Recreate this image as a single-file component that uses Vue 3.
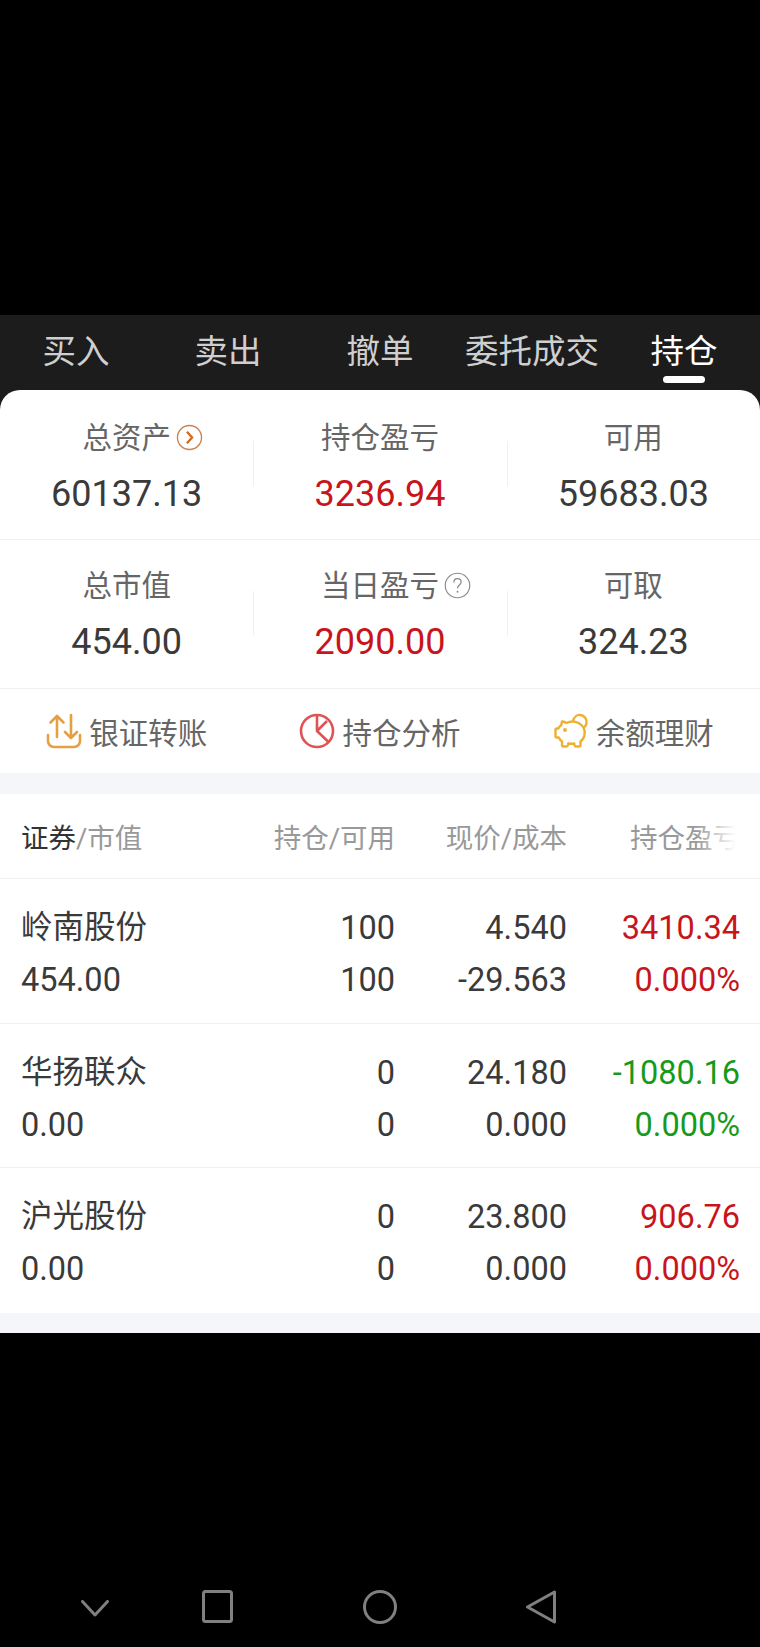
<template>
  <div class="page">
    <div class="top-space"></div>

    <div class="tabs">
      <div v-for="tab in tabs" :key="tab" class="tab" :class="{ active: tab === '持仓' }">{{ tab }}</div>
    </div>

    <div class="sheet">
      <div v-for="(row, r) in stats" :key="r" class="stat-row">
        <div v-for="item in row" :key="item.label" class="stat">
          <div class="stat-label">
            <span class="label-text">{{ item.label }}
              <svg v-if="item.icon === 'go'" class="label-icon" viewBox="0 0 26 26" fill="none">
                <circle cx="13" cy="13" r="11.6" stroke="#c9814f" stroke-width="1.3" />
                <path d="M10.5 7.5L15.5 13L10.5 18.5" stroke="#d2691e" stroke-width="2.2" />
              </svg>
              <svg v-if="item.icon === 'help'" class="label-icon" viewBox="0 0 26 26" fill="none">
                <circle cx="13" cy="13" r="11.8" stroke="#8a8a8a" stroke-width="1.1" />
                <path d="M9.5 10c0-2.3 1.500-3.700 3.500-3.700s3.500 1.300 3.500 3.300c0 2.800-3.500 3-3.500 6" stroke="#8a8a8a" stroke-width="1.200" />
                <circle cx="13" cy="19" r="0.9" fill="#8a8a8a" />
              </svg>
            </span>
          </div>
          <div class="stat-value" :class="{ red: item.red }">{{ item.value }}</div>
        </div>
      </div>

      <div class="actions">
        <div class="action">
          <svg class="action-icon" viewBox="0 0 36 36" fill="none" stroke="#e5a043" stroke-width="2.600" stroke-linecap="round" stroke-linejoin="round">
            <path d="M2 22v6a6 6 0 0 0 6 6h20a6 6 0 0 0 6-6v-6" />
            <path d="M11 24V3M4.500 9.500L11 3l6.500 6.500" />
            <path d="M25 2v23M19 19l6 6 6-6" />
          </svg>
          <span>银证转账</span>
        </div>
        <div class="action">
          <svg class="action-icon" viewBox="0 0 36 36" fill="none" stroke="#df5355" stroke-width="2.600" stroke-linejoin="round">
            <circle cx="18" cy="18" r="16" />
            <path d="M18 2v16l11.500 11M18 18l10-10" />
          </svg>
          <span>持仓分析</span>
        </div>
        <div class="action">
          <svg class="action-icon" viewBox="0 0 36 36" fill="none" stroke="#eeb02f" stroke-width="2.400" stroke-linejoin="round" stroke-linecap="round">
            <path d="M20 8c1-4 4-6.500 7.500-6 4 .5 6.500 4 6 8-.2 1.500-.7 2.500-1.500 3.500" />
            <path d="M9 8.500c2.500 0 3.500 1 4.500 1.500 3-1.500 8-2 12 0 5 2.500 7 7 6 12-.5 3-2 5-4 6.500v3.500c0 1-.7 1.500-1.500 1.500h-3c-.8 0-1.300-.5-1.500-1.500l-.3-1.500c-2 .4-4 .4-6 0l-.2 1.500c-.2 1-.7 1.500-1.500 1.500h-3c-.8 0-1.500-.5-1.500-1.500v-3.500c-1.500-1-2.500-2.500-3.200-4H4c-1 0-1.500-.7-1.500-1.500v-6c0-.8.500-1.500 1.500-1.500h1.300c.7-1.500 1.700-2.500 3-3.500z" />
            <circle cx="12" cy="17" r="0.8" fill="#eeb02f" />
          </svg>
          <span>余额理财</span>
        </div>
      </div>

      <div class="band"></div>

      <div class="table">
        <div class="table-head">
          <div class="cell-name"><b>证券</b>/市值</div>
          <div class="cell">持仓/可用</div>
          <div class="cell">现价/成本</div>
          <div class="cell fade">持仓盈亏</div>
        </div>
        <div v-for="s in stocks" :key="s.name" class="table-row">
          <div class="cell-name">
            <div class="stock-name">{{ s.name }}</div>
            <div>{{ s.cap }}</div>
          </div>
          <div class="cell">
            <div>{{ s.hold }}</div>
            <div>{{ s.free }}</div>
          </div>
          <div class="cell">
            <div>{{ s.price }}</div>
            <div>{{ s.cost }}</div>
          </div>
          <div class="cell" :class="s.gain">
            <div>{{ s.profit }}</div>
            <div>{{ s.rate }}</div>
          </div>
        </div>
      </div>

      <div class="band bottom"></div>
    </div>

    <div class="nav">
      <svg class="nav-chevron" viewBox="0 0 28 17" fill="none">
        <path d="M1.500 1.500L14 15L26.500 1.500" />
      </svg>
      <svg class="nav-square" viewBox="0 0 31 33" fill="none">
        <rect x="1.500" y="1.500" width="28" height="30" rx="2" />
      </svg>
      <svg class="nav-circle" viewBox="0 0 34 34" fill="none">
        <circle cx="17" cy="17" r="15.500" />
      </svg>
      <svg class="nav-back" viewBox="0 0 30 34" fill="none">
        <path d="M28.500 2v30L1.500 17z" />
      </svg>
    </div>
  </div>
</template>

<script setup>
const tabs = ['买入', '卖出', '撤单', '委托成交', '持仓']

const stats = [
  [
    { label: '总资产', value: '60137.13', icon: 'go' },
    { label: '持仓盈亏', value: '3236.94', red: true },
    { label: '可用', value: '59683.03' }
  ],
  [
    { label: '总市值', value: '454.00' },
    { label: '当日盈亏', value: '2090.00', red: true, icon: 'help' },
    { label: '可取', value: '324.23' }
  ]
]

const stocks = [
  { name: '岭南股份', cap: '454.00', hold: '100', free: '100', price: '4.540', cost: '-29.563', profit: '3410.34', rate: '0.000%', gain: 'red' },
  { name: '华扬联众', cap: '0.00', hold: '0', free: '0', price: '24.180', cost: '0.000', profit: '-1080.16', rate: '0.000%', gain: 'green' },
  { name: '沪光股份', cap: '0.00', hold: '0', free: '0', price: '23.800', cost: '0.000', profit: '906.76', rate: '0.000%', gain: 'red' }
]
</script>

<style>
html,
body {
  margin: 0;
  background: #000;
}
</style>

<style scoped>
.page {
  width: 760px;
  height: 1647px;
  background: #000;
  overflow: hidden;
  font-family: Roboto, "Noto Sans CJK SC", sans-serif;
}

.top-space {
  height: 315px;
}

.tabs {
  display: grid;
  grid-template-columns: repeat(5, 152px);
  height: 95px;
  background: #1c1c1c;
}

.tab {
  position: relative;
  padding-top: 13px;
  height: 48px;
  line-height: 48px;
  text-align: center;
  font-size: 33.5px;
  color: #cfcfcf;
}

.tab.active {
  color: #fff;
}

.tab.active::after {
  content: "";
  position: absolute;
  left: 55px;
  top: 61px;
  width: 42px;
  height: 7px;
  border-radius: 4px;
  background: #fff;
}

.sheet {
  margin-top: -20px;
  position: relative;
  background: #fff;
  border-radius: 20px 20px 0 0;
}

.stat-row {
  display: grid;
  grid-template-columns: repeat(3, 1fr);
  height: 148px;
  border-bottom: 1px solid #f2f2f2;
  box-sizing: content-box;
}

.stat-row:first-child {
  height: 149px;
}

.stat {
  position: relative;
  text-align: center;
}

.stat + .stat::before {
  content: "";
  position: absolute;
  left: 0;
  top: 51px;
  height: 45px;
  width: 1px;
  background: #f0f0f0;
}

.stat-label {
  padding-top: 25px;
  height: 42px;
  line-height: 42px;
  font-size: 29.5px;
  color: #666;
}

.stat-row:first-child .stat-label {
  padding-top: 27px;
}

.label-text {
  position: relative;
  display: inline-block;
}

.label-icon {
  position: absolute;
  right: -32px;
  top: 7px;
  width: 27px;
  height: 27px;
}

.stat-value {
  margin-top: 12px;
  line-height: 46px;
  font-size: 36px;
  color: #3a3a3a;
}

.red {
  color: #c8151b;
}

.green {
  color: #159a1c;
}

.actions {
  display: grid;
  grid-template-columns: repeat(3, 1fr);
  height: 84px;
}

.action {
  display: flex;
  align-items: center;
  justify-content: center;
  gap: 7px;
  font-size: 29.5px;
  color: #666;
}

.action-icon {
  width: 36px;
  height: 36px;
}

.band {
  height: 21px;
  background: #f5f6fa;
}

.band.bottom {
  height: 20px;
}

.table-head,
.table-row {
  display: grid;
  grid-template-columns: 1fr 172px 172px 173px;
  box-sizing: border-box;
  width: 760px;
  padding: 0 20px 0 21px;
  border-bottom: 1px solid #f2f2f2;
}

.table-head {
  height: 85px;
  align-items: center;
  font-size: 27.5px;
  color: #999;
}

.table-head b {
  font-weight: 400;
  color: #333;
}

.table-row {
  height: 144.5px;
  padding-top: 23px;
  font-size: 32.5px;
  line-height: 52px;
  color: #3a3a3a;
}

.stock-name {
  font-size: 31.5px;
}

.table-row:last-child {
  border-bottom: none;
}

.cell {
  position: relative;
  text-align: right;
}

.fade::after {
  content: "";
  position: absolute;
  right: 0;
  top: 0;
  bottom: 0;
  width: 44px;
  background: linear-gradient(to right, rgba(255, 255, 255, 0), #fff 90%);
}

.nav {
  display: flex;
  align-items: flex-start;
  padding: 257px 0 0 81px;
}

.nav svg {
  stroke: #808080;
  stroke-width: 3;
  stroke-linejoin: round;
  stroke-linecap: round;
  flex: none;
}

.nav-chevron {
  width: 28px;
  height: 17px;
  margin-top: 10px;
}

.nav-square {
  width: 31px;
  height: 33px;
  margin-left: 93px;
}

.nav-circle {
  width: 34px;
  height: 34px;
  margin-left: 130px;
}

.nav-back {
  width: 30px;
  height: 34px;
  margin-left: 129px;
}
</style>
